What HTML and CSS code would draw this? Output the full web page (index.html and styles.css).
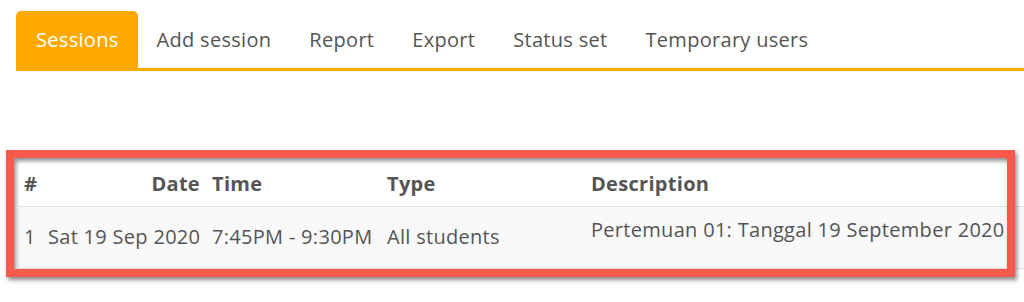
FILE: index.html
```html
<!DOCTYPE html>
<html lang="en">
<head>
  <meta charset="UTF-8" />
  <title>Attendance - Sessions</title>
  <link rel="stylesheet" href="styles.css">
</head>
<body>
  <nav class="tabs">
    <a class="tab active" href="#">Sessions</a>
    <a class="tab" href="#">Add session</a>
    <a class="tab" href="#">Report</a>
    <a class="tab" href="#">Export</a>
    <a class="tab" href="#">Status set</a>
    <a class="tab" href="#">Temporary users</a>
  </nav>

  <section class="sessions">
    <table class="session-table">
      <colgroup>
        <col class="c-num">
        <col class="c-date">
        <col class="c-time">
        <col class="c-type">
        <col class="c-desc">
      </colgroup>
      <thead>
        <tr>
          <th>#</th>
          <th class="right">Date</th>
          <th>Time</th>
          <th>Type</th>
          <th>Description</th>
        </tr>
      </thead>
      <tbody>
        <tr>
          <td>1</td>
          <td class="right">Sat 19 Sep 2020</td>
          <td>7:45PM - 9:30PM</td>
          <td>All students</td>
          <td class="desc">Pertemuan 01: Tanggal 19 September 2020</td>
        </tr>
      </tbody>
    </table>
    <div class="highlight"></div>
  </section>
</body>
</html>
```

FILE: styles.css
```css
* {
  margin: 0;
  padding: 0;
  box-sizing: border-box;
}
html, body {
  width: 100%;
  height: 100%;
  overflow: hidden;
  background: #fff;
  font-family: 'Open Sans', sans-serif;
  font-size: 20px;
  letter-spacing: 0.3px;
  color: #555;
}
.tabs {
  display: flex;
  margin: 11px 0 0 16px;
  border-bottom: 3px solid #ffa800;
}
.tab {
  display: block;
  padding: 15px 19px;
  line-height: 27px;
  color: #555;
  text-decoration: none;
  border-radius: 5px 5px 0 0;
}
.tab.active {
  background: #ffa800;
  color: #fff;
  padding-left: 20px;
}
.sessions {
  position: relative;
  padding-top: 86px;
}
.session-table {
  table-layout: fixed;
  border-collapse: collapse;
  width: 1100px;
  margin-left: 18px;
}
.c-num { width: 24px; }
.c-date { width: 164px; }
.c-time { width: 175px; }
.c-type { width: 204px; }
.session-table th,
.session-table td {
  text-align: left;
  padding: 0 6px;
  line-height: 30px;
  white-space: nowrap;
}
.session-table th {
  height: 49px;
  font-weight: 700;
  vertical-align: bottom;
  padding-bottom: 7px;
  border-bottom: 1px solid #dedede;
}
.session-table td {
  height: 62px;
  background: #f9f9f9;
  vertical-align: middle;
  border-bottom: 1px solid #e4e4e4;
}
.session-table td.desc {
  vertical-align: top;
  padding-top: 8px;
}
.session-table .right {
  text-align: right;
}
.highlight {
  position: absolute;
  left: 6px;
  top: 79px;
  width: 1009px;
  height: 127px;
  border: 8px solid #f65a4c;
  box-shadow: 2px 3px 4px rgba(0, 0, 0, 0.45), inset 2px 3px 4px rgba(0, 0, 0, 0.45);
  pointer-events: none;
}
```
